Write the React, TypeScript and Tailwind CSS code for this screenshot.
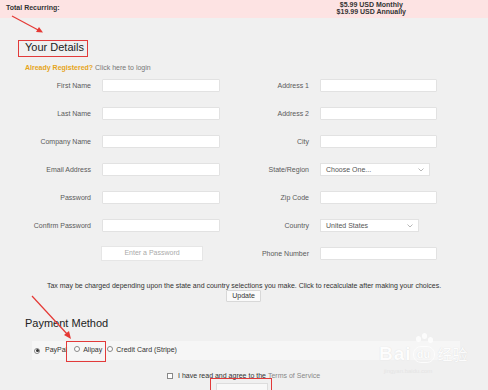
import React from "react";

const F = { fontFamily: '"Liberation Sans", Arial, sans-serif' };

function Label({ children, w }: { children: React.ReactNode; w: string }) {
  return <div className={`${w} text-right text-[7px] leading-[9px] text-[#5a5a5a]`}>{children}</div>;
}

function Input({ w = "w-[118px]" }: { w?: string }) {
  return <div className={`${w} h-[13px] bg-white border border-[#e2e2e2] rounded-[1px]`} />;
}

function Select({ w, text }: { w: string; text: string }) {
  return (
    <div className={`${w} h-[13px] bg-white border border-[#e2e2e2] flex items-center justify-between pl-[5px] pr-[5px]`}>
      <span className="text-[7px] leading-[9px] text-[#555]">{text}</span>
      <svg width="6" height="4" viewBox="0 0 6 4">
        <path d="M0.5 0.5 L3 3 L5.5 0.5" fill="none" stroke="#999" strokeWidth="0.7" />
      </svg>
    </div>
  );
}

function Row({ children }: { children: React.ReactNode }) {
  return <div className="h-[13px] flex items-center">{children}</div>;
}

function Radio({ checked }: { checked?: boolean }) {
  return (
    <span className="inline-flex w-[6px] h-[6px] rounded-full border border-[#888] bg-white items-center justify-center">
      {checked && <span className="w-[3px] h-[3px] rounded-full bg-[#333]" />}
    </span>
  );
}

export default function App() {
  const left = ["First Name", "Last Name", "Company Name", "Email Address", "Password", "Confirm Password"];
  return (
    <div style={F} className="relative w-[488px] h-[390px] overflow-hidden bg-[#f0f0f0]">
      {/* top bar */}
      <div className="h-[18px] bg-[#fde3e3] flex justify-between pl-[6px] pr-[82px]">
        <div className="pt-[4px] text-[7px] leading-[8px] font-bold text-[#333]">Total Recurring:</div>
        <div className="pt-[1px] text-center text-[7px] leading-[7px] font-bold text-[#333]">
          <div>$5.99 USD Monthly</div>
          <div>$19.99 USD Annually</div>
        </div>
      </div>

      <div className="mt-[23px] pl-[25px] text-[11px] leading-[12px] text-[#222]">Your Details</div>

      <div className="mt-[10px] pl-[25px] text-[7px] leading-[9px]">
        <span className="font-bold text-[#e6a51a]">Already Registered?</span>{" "}
        <span className="text-[#777]">Click here to login</span>
      </div>

      {/* form */}
      <div className="mt-[7px] flex">
        <div className="w-[220px] flex flex-col gap-[15px]">
          {left.map((l) => (
            <Row key={l}>
              <Label w="w-[91px]">{l}</Label>
              <div className="ml-[11px]"><Input /></div>
            </Row>
          ))}
          <Row>
            <div className="ml-[101px] w-[102px] h-[15px] bg-white border border-[#e6e6e6] flex items-center justify-center text-[7px] text-[#aaa]">
              Enter a Password
            </div>
          </Row>
        </div>
        <div className="flex flex-col gap-[15px]">
          <Row><Label w="w-[89px]">Address 1</Label><div className="ml-[11px]"><Input w="w-[117px]" /></div></Row>
          <Row><Label w="w-[89px]">Address 2</Label><div className="ml-[11px]"><Input w="w-[117px]" /></div></Row>
          <Row><Label w="w-[89px]">City</Label><div className="ml-[11px]"><Input w="w-[117px]" /></div></Row>
          <Row><Label w="w-[89px]">State/Region</Label><div className="ml-[11px]"><Select w="w-[110px]" text="Choose One..." /></div></Row>
          <Row><Label w="w-[89px]">Zip Code</Label><div className="ml-[11px]"><Input w="w-[117px]" /></div></Row>
          <Row><Label w="w-[89px]">Country</Label><div className="ml-[11px]"><Select w="w-[99px]" text="United States" /></div></Row>
          <Row><Label w="w-[89px]">Phone Number</Label><div className="ml-[11px]"><Input w="w-[117px]" /></div></Row>
        </div>
      </div>

      <div className="mt-[21px] text-center text-[7px] leading-[9px] text-[#333]">
        Tax may be charged depending upon the state and country selections you make. Click to recalculate after making your choices.
      </div>
      <div className="flex justify-center">
        <div className="ml-[-1px] w-[35px] h-[12px] bg-[#fafafa] border border-[#d8d8d8] rounded-[1px] flex items-center justify-center text-[7px] text-[#333]">
          Update
        </div>
      </div>

      <div className="mt-[15px] pl-[25px] text-[11px] leading-[12px] text-[#222]">Payment Method</div>

      <div className="mt-[12px] ml-[32px] w-[428px] h-[19px] bg-[#f6f6f6] flex items-center pl-[2px] text-[7px] text-[#333]">
        <Radio checked />
        <span className="ml-[5px]">PayPal</span>
        <span className="ml-[7px]"><Radio /></span>
        <span className="ml-[3px]">Alipay</span>
        <span className="ml-[5px]"><Radio /></span>
        <span className="ml-[3px]">Credit Card (Stripe)</span>
      </div>

      <div className="mt-[11px] flex items-center pl-[167px] text-[7px] leading-[9px]">
        <span className="w-[6px] h-[6px] border border-[#888] bg-white" />
        <span className="ml-[5px] text-[#333]">I have read and agree to the</span>
        <span className="ml-[2px] text-[#888]">Terms of Service</span>
      </div>
      <div className="mt-[3px] ml-[216px] w-[52px] h-[12px] bg-[#f8f8f8] border border-[#ddd]" />

      {/* annotation overlays */}
      <div className="absolute left-[18px] top-[40px] w-[70px] h-[17px] border-[1.5px] border-[#e23a3a]" />
      <div className="absolute left-[66px] top-[341px] w-[40px] h-[21px] border-[1.5px] border-[#e23a3a]" />
      <div className="absolute left-[210px] top-[378px] w-[62px] h-[20px] border-[1.5px] border-[#e23a3a]" />
      <svg className="absolute left-0 top-0" width="488" height="390" viewBox="0 0 488 390">
        <line x1="12" y1="16" x2="40" y2="31" stroke="#e53935" strokeWidth="1.2" />
        <path d="M43 32.5 L36 32 L39 27 Z" fill="#e53935" />
        <line x1="32" y1="296" x2="68" y2="335" stroke="#e53935" strokeWidth="1.2" />
        <path d="M71 339 L64 335 L69 331 Z" fill="#e53935" />
      </svg>

      {/* watermark */}
      <div className="absolute left-[379px] top-[333px] flex items-end text-white opacity-80 [text-shadow:0_0_1px_rgba(0,0,0,0.15)]">
        <span className="text-[19px] leading-[19px] font-bold tracking-[1px]">Bai</span>
        <span className="relative w-[24px] h-[30px] flex items-end justify-center">
          <span className="absolute left-[4px] top-[3px] w-[5px] h-[6px] rounded-full bg-white" />
          <span className="absolute left-[10px] top-[0px] w-[5px] h-[6px] rounded-full bg-white" />
          <span className="absolute left-[16px] top-[4px] w-[5px] h-[6px] rounded-full bg-white" />
          <span className="w-[22px] h-[17px] rounded-[8px] border-[1.5px] border-white text-white text-[11px] leading-[14px] text-center font-bold">du</span>
        </span>
        <span className="ml-[2px] text-[15px] leading-[18px]" style={{ fontFamily: '"Noto Sans CJK SC", sans-serif' }}>经验</span>
      </div>
      <div className="absolute left-[384px] top-[368px] text-[6px] leading-[7px] text-[#e4e4e4]">jingyan.baidu.com</div>
    </div>
  );
}
